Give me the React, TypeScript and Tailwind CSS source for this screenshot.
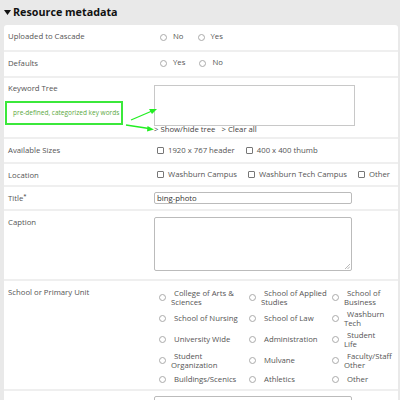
const font = { fontFamily: '"Open Sans", "Liberation Sans", sans-serif' };

function Radio({ label }: { label: string }) {
  return (
    <span className="flex items-center gap-[6px] mr-[14px] whitespace-nowrap">
      <span className="w-[7px] h-[7px] rounded-full border border-[#aaa] bg-white" />
      <span>{label}</span>
    </span>
  );
}

function Check({ label }: { label: string }) {
  return (
    <span className="flex items-center gap-[4px] mr-[11px] whitespace-nowrap shrink-0">
      <span className="w-[7px] h-[7px] rounded-[1px] border border-[#777] bg-white" />
      <span>{label}</span>
    </span>
  );
}

function Row({
  label,
  first,
  height,
  children,
  required,
}: {
  label: string;
  first?: boolean;
  height: string;
  children?: React.ReactNode;
  required?: boolean;
}) {
  return (
    <div className={`flex ${height} ${first ? "" : "border-t-2 border-[#efefef]"}`}>
      <div className="w-[150px] shrink-0 pl-[4px] pt-[6px] leading-[10px]">
        {label}
        {required && <sup className="text-[6px] text-[#333]">*</sup>}
      </div>
      <div className="flex-1 min-w-0">{children}</div>
    </div>
  );
}

const schools: [string, string, string][] = [
  ["College of Arts & Sciences", "School of Applied Studies", "School of Business"],
  ["School of Nursing", "School of Law", "Washburn Tech"],
  ["University Wide", "Administration", "Student Life"],
  ["Student Organization", "Mulvane", "Faculty/Staff Other"],
  ["Buildings/Scenics", "Athletics", "Other"],
];

function SchoolOpt({ label, w, lw }: { label: string; w: string; lw: string }) {
  return (
    <div className={`flex items-center shrink-0 ${w}`}>
      <span className="w-[7px] h-[7px] ml-[2px] mr-[5px] shrink-0 rounded-full border border-[#aaa]" />
      <span className={`indent-[3px] leading-[9px] ${lw}`}>{label}</span>
    </div>
  );
}

export default function App() {
  return (
    <div
      className="w-[400px] h-[400px] overflow-hidden bg-[#e9e9e9] text-[7.75px] text-[#555]"
      style={font}
    >
      <div className="h-[25px] flex items-center pl-[4px] gap-[2px]">
        <svg width="7" height="5" viewBox="0 0 7 5">
          <path d="M0 0 L7 0 L3.5 5 Z" fill="#111" />
        </svg>
        <span className="text-[10.75px] font-bold text-[#111]">Resource metadata</span>
      </div>

      <div className="ml-[4px] mr-[2px] bg-white rounded-t-[3px]">
        <Row label="Uploaded to Cascade" first height="h-[25px]">
          <div className="flex items-center h-full pl-[6px] pb-[1px]">
            <Radio label="No" />
            <Radio label="Yes" />
          </div>
        </Row>

        <Row label="Defaults" height="h-[26px]">
          <div className="flex items-center h-full pl-[6px] pb-[2px]">
            <Radio label="Yes" />
            <Radio label="No" />
          </div>
        </Row>

        <div className="relative flex h-[61px] border-t-2 border-[#efefef]">
          <div className="w-[150px] shrink-0 pt-[5px] leading-[10px]">
            <div className="pl-[4px]">Keyword Tree</div>
            <div className="mt-[8px] ml-[1px] w-[118px] h-[24px] border-2 border-[#3be83b] flex items-center pl-[6px] text-[6.5px] text-[#5aa83e] whitespace-nowrap">
              pre-defined, categorized key words
            </div>
          </div>
          <div className="flex-1 pt-[7px]">
            <div className="w-[201px] h-[41px] border border-[#c8c8c8]" />
            <div className="leading-[9px] mt-[-1px] text-[#444] whitespace-nowrap">
              &gt; Show/hide tree&nbsp;&nbsp; &gt; Clear all
            </div>
          </div>
          <svg
            className="absolute left-0 top-0 pointer-events-none"
            width="200"
            height="61"
            viewBox="0 0 200 61"
          >
            <g stroke="#22ee22" strokeWidth="1.3" fill="#22ee22">
              <line x1="127" y1="42" x2="148" y2="33" />
              <path d="M153 31 L145 31 L148 36 Z" stroke="none" />
              <line x1="122" y1="47" x2="145" y2="50.5" />
              <path d="M150 51.5 L143.5 48 L143 53.5 Z" stroke="none" />
            </g>
          </svg>
        </div>

        <Row label="Available Sizes" height="h-[25px]">
          <div className="flex items-center h-[23px] pl-[3px]">
            <Check label="1920 x 767 header" />
            <Check label="400 x 400 thumb" />
          </div>
        </Row>

        <Row label="Location" height="h-[23px]">
          <div className="flex items-center h-[21px] pl-[3px]">
            <Check label="Washburn Campus" />
            <Check label="Washburn Tech Campus" />
            <Check label="Other" />
          </div>
        </Row>

        <Row label="Title" required height="h-[24px]">
          <div className="pt-[5px]">
            <div className="w-[198px] h-[12px] border border-[#bbb] rounded-[2px] flex items-center pl-[2px] text-[#333] leading-[10px]">
              bing-photo
            </div>
          </div>
        </Row>

        <Row label="Caption" height="h-[70px]">
          <div className="pt-[6px]">
            <div className="relative w-[198px] h-[54px] border border-[#bbb] rounded-[2px]">
              <svg className="absolute right-[1px] bottom-[1px]" width="5" height="5" viewBox="0 0 5 5">
                <path d="M5 0 L0 5 M5 2.5 L2.5 5" stroke="#999" strokeWidth="0.7" />
              </svg>
            </div>
          </div>
        </Row>

        <Row label="School or Primary Unit" height="h-[110px]">
          <div className="pt-[6px] pl-[3px] flex flex-col">
            {schools.map((r, i) => (
              <div key={i} className={`flex ${i === 4 ? "h-[17px]" : "h-[21px]"} items-center`}>
                <SchoolOpt label={r[0]} w="w-[90px]" lw="w-[72px]" />
                <SchoolOpt label={r[1]} w="w-[83px]" lw="w-[70px]" />
                <SchoolOpt label={r[2]} w="w-[60px]" lw="w-[37px]" />
              </div>
            ))}
          </div>
        </Row>

        <Row label="Department" height="h-[30px]">
          <div className="pt-[5px]">
            <div className="w-[198px] h-[12px] border border-[#bbb] rounded-[2px]" />
          </div>
        </Row>
      </div>
    </div>
  );
}
